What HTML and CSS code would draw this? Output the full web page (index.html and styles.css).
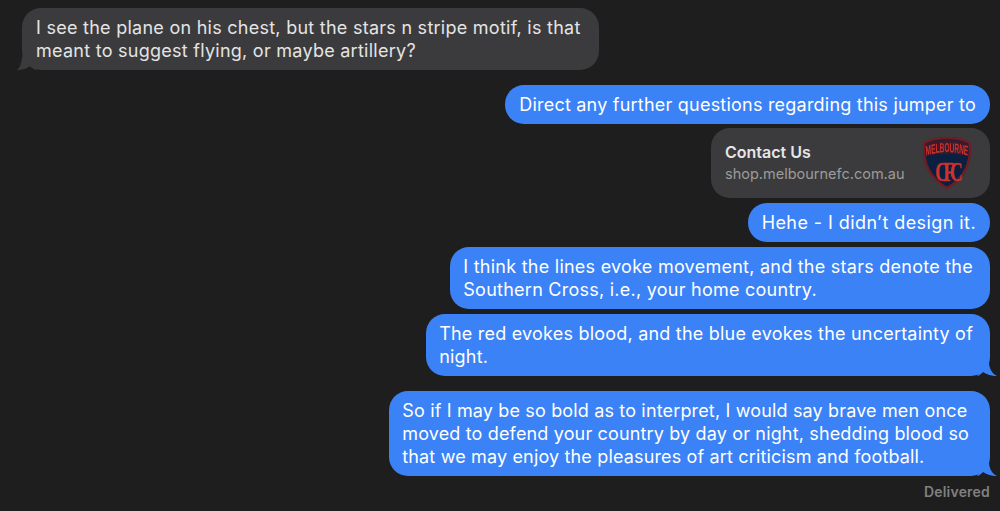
FILE: index.html
```html
<!DOCTYPE html>
<html lang="en">
<head>
<meta charset="utf-8">
<title>Messages</title>
<link rel="stylesheet" href="styles.css">
</head>
<body>
<main class="thread">
  <div class="bubble in">I see the plane on his chest, but the stars n stripe motif, is that<br>meant to suggest flying, or maybe artillery?
    <svg class="tail tail-in" width="20" height="14" viewBox="0 0 20 14"><path d="M5 0 C5 6 3 12 0 14 C4 14.300 10 13 13 10 C15 12 18 14 20 14Z"/></svg>
  </div>
  <div class="bubble out first sp-narrow">Direct any further questions regarding this jumper to</div>
  <div class="link">
    <div class="link-text">
      <div class="link-title">Contact Us</div>
      <div class="link-url">shop.melbournefc.com.au</div>
    </div>
    <svg class="logo" width="50" height="54" viewBox="0 0 50 54">
      <defs><path id="logo-arc" d="M2 10.500 Q24 6.500 46 10.500"/></defs>
      <path class="logo-shield" d="M1.500 7 C8 3 14 2 24 2 C34 2 40 3 46.500 7 C49 25 42 42 24 52 C6 42 -1 25 1.500 7Z"/>
      <path class="logo-band" d="M3 8 C9 5 15 4 24 4 C33 4 39 5 45 8 L44.500 20 C34 17 14 17 3.500 20Z"/>
      <g class="logo-glyphs">
        <text class="logo-name" transform="scale(1 1.9)"><textPath href="#logo-arc" startOffset="50%" textLength="42" lengthAdjust="spacingAndGlyphs">MELBOURNE</textPath></text>
        <text class="logo-mono" transform="translate(24 45) scale(.8 1.2)">CFC</text>
      </g>
    </svg>
  </div>
  <div class="bubble out tight sp-wide">Hehe - I didn’t design it.</div>
  <div class="bubble out tight sp-mid">I think the lines evoke movement, and the stars denote the<br>Southern Cross, i.e., your home country.</div>
  <div class="bubble out tight sp-tight">The red evokes blood, and the blue evokes the uncertainty of<br>night.
    <svg class="tail tail-out" width="20" height="14" viewBox="0 0 20 14"><path d="M12 0 C12 6 15 12 20 14 C16 14.300 10 13 6 10 C4 12 2 14 0 14Z"/></svg>
  </div>
  <div class="bubble out last sp-tighter">So if I may be so bold as to interpret, I would say brave men once<br>moved to defend your country by day or night, shedding blood so<br>that we may enjoy the pleasures of art criticism and football.
    <svg class="tail tail-out" width="20" height="14" viewBox="0 0 20 14"><path d="M12 0 C12 6 15 12 20 14 C16 14.300 10 13 6 10 C4 12 2 14 0 14Z"/></svg>
  </div>
  <div class="status">Delivered</div>
</main>
</body>
</html>
```
FILE: styles.css
```css
* { box-sizing: border-box; }
html, body { margin: 0; height: 100%; }
body {
  background: #1e1e1e;
  overflow: hidden;
  font-family: Inter, "Liberation Sans", sans-serif;
}
.thread {
  display: flex;
  flex-direction: column;
  align-items: flex-end;
  padding: 8px 10px 0 22px;
}
.bubble {
  position: relative;
  padding: 8px 14px;
  border-radius: 19px;
  font-size: 18px;
  letter-spacing: 0.26px;
  line-height: 23px;
  white-space: nowrap;
}
.sp-narrow { letter-spacing: 0.22px; }
.sp-mid { letter-spacing: 0.25px; padding-left: 13px; padding-right: 17px; }
.sp-wide { letter-spacing: 0.42px; }
.sp-tight { letter-spacing: 0.21px; padding-left: 13px; padding-right: 17px; }
.sp-tighter { letter-spacing: 0.155px; padding-left: 13px; padding-right: 21px; }
.in {
  align-self: flex-start;
  padding-right: 18px;
  background: #3b3b3d;
  color: #e4e4e4;
}
.out {
  background: #3b82f6;
  color: #fff;
}
.first { margin-top: 15px; }
.tight { margin-top: 5px; }
.last { margin-top: 15px; }
.tail { position: absolute; bottom: 0; }
.tail-in { left: -5px; fill: #3b3b3d; }
.tail-out { right: -7px; fill: #3b82f6; }
.link {
  display: flex;
  align-items: center;
  justify-content: space-between;
  width: 279px;
  height: 70px;
  margin-top: 4px;
  padding: 0 18px 1px 14px;
  border-radius: 19px;
  background: #3b3b3d;
}
.link-title {
  font-size: 16px;
  line-height: 20px;
  font-weight: 600;
  color: #e6e6e6;
}
.link-url {
  margin-top: 3px;
  font-size: 14.5px;
  line-height: 18px;
  color: #9b9b9b;
}
.logo { flex: none; margin-right: -1px; }
.logo-shield {
  fill: #0b2040;
  stroke: #6e1d25;
  stroke-width: 2.5;
}
.logo-band { fill: #3c1a2a; }
.logo-glyphs { filter: blur(0.35px); }
.logo-name, .logo-mono {
  font-family: "Liberation Sans", sans-serif;
  font-weight: 700;
  fill: #cf322d;
  text-anchor: middle;
}
.logo-name { font-size: 7px; }
.logo-mono {
  font-family: "Liberation Serif", serif;
  font-size: 22px;
  letter-spacing: -5.5px;
  stroke: #cf322d;
  stroke-width: 0.4;
}
.status {
  margin-top: 7px;
  font-size: 14px;
  letter-spacing: 0.2px;
  line-height: 17px;
  font-weight: 600;
  color: #808080;
}
```
